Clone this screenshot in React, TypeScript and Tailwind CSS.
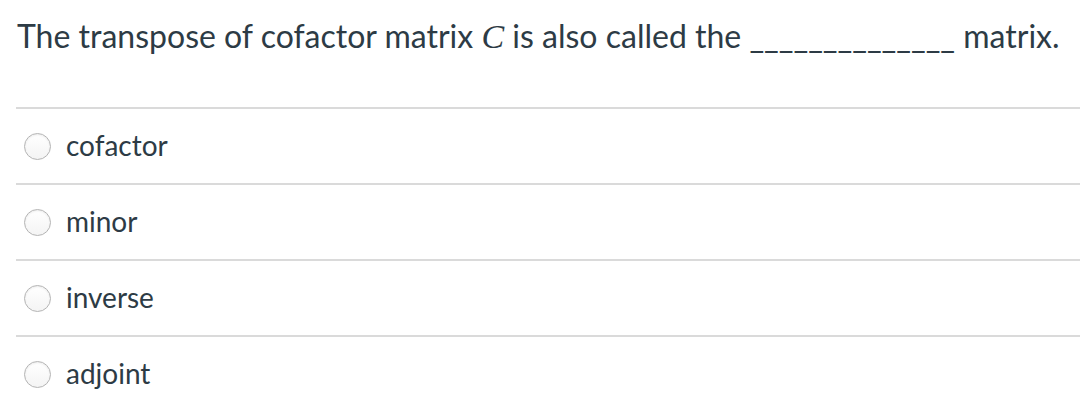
export default function App() {
  const options = ["cofactor", "minor", "inverse", "adjoint"];

  return (
    <div
      className="w-[1080px] h-[416px] bg-white text-[#2d3b45] overflow-hidden"
      style={{ fontFamily: "Lato, 'Noto Sans', sans-serif" }}
    >
      <div className="pl-[17px] pt-[16px] h-[107px] text-[32px] leading-[40px] whitespace-nowrap">
        The transpose of cofactor matrix{" "}
        <span className="italic text-[34px]" style={{ fontFamily: "'Liberation Serif', serif" }}>
          C
        </span>{" "}
        is also called the ______________ matrix.
      </div>
      <div className="pl-4">
        {options.map((o) => (
          <div key={o} className="border-t-2 border-[#dadada] h-[76px] flex items-center">
            <span className="ml-[8px] w-[27px] h-[27px] rounded-full border border-[#b4b4b4] bg-gradient-to-b from-white to-[#f4f4f4] shadow-[inset_0_1px_2px_rgba(0,0,0,0.08)]" />
            <span className="ml-[15px] text-[28px] leading-none -mt-[3px]">{o}</span>
          </div>
        ))}
      </div>
    </div>
  );
}
